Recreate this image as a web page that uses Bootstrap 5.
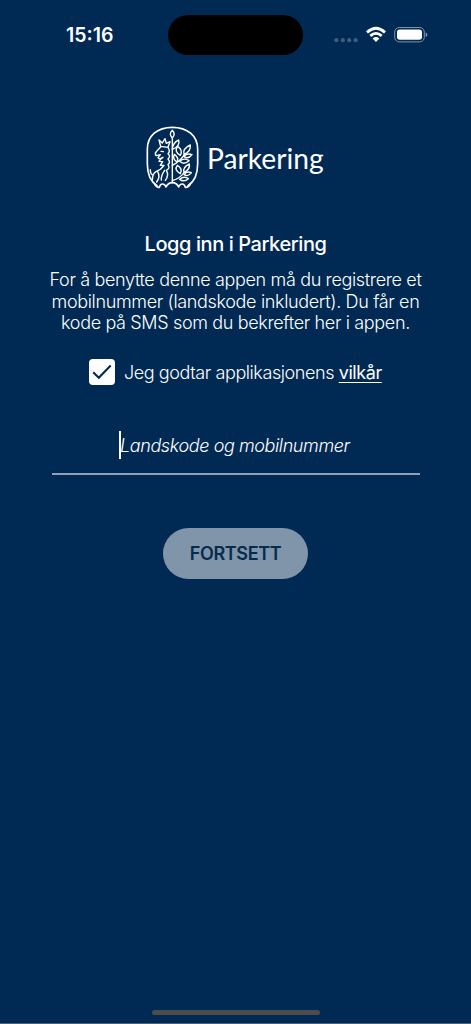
<!DOCTYPE html>
<html lang="no">

<head>
    <meta charset="UTF-8">
    <meta name="viewport" content="width=device-width, initial-scale=1.0">
    <title>Parkering</title>
    <link href="https://cdn.jsdelivr.net/npm/bootstrap@5.3.3/dist/css/bootstrap.min.css" rel="stylesheet">
    <style>
        body {
            background: #002a54;
            font-family: Inter, "Liberation Sans", sans-serif;
            color: #fff;
        }

        .screen {
            height: 1024px;
            overflow: hidden;
            border-bottom: 1px solid #50617a;
        }

        .status-bar {
            height: 70px;
            padding: 0 43px 0 66px;
        }

        .clock {
            width: 102px;
            padding-top: 2px;
            font-size: 19.5px;
            font-weight: 600;
        }

        .island {
            width: 135px;
            height: 40px;
            background: #000;
        }

        .brand {
            margin-top: 50px;
            height: 75px;
            padding-left: 140px;
        }

        .brand-name {
            font-family: Lato, sans-serif;
            font-size: 28.2px;
            line-height: 34px;
            padding: 21px 0 0 2px;
        }

        .heading {
            margin: 36px 0 0;
            font-size: 20px;
            line-height: 26px;
            font-weight: 500;
            letter-spacing: -.42px;
        }

        .intro {
            margin: 12px 0 0;
            font-size: 18px;
            line-height: 21.6px;
            font-weight: 300;
            letter-spacing: -.35px;
        }

        .terms {
            margin: 24px 0 0 89px;
            height: 28px;
            font-size: 18px;
            font-weight: 300;
            letter-spacing: -.42px;
        }

        .terms-box {
            width: 26px;
            height: 26px;
            border-radius: 4px;
            background: #fff;
            margin-right: 9px;
        }

        .terms-text {
            padding-top: 1px;
        }

        .terms a {
            color: #fff;
            font-weight: 400;
            text-decoration-thickness: 1px;
            text-underline-offset: 3px;
        }

        .phone-field {
            margin: 45px 51px 0 52px;
            height: 44px;
            border-bottom: 2px solid #929fb8;
            padding-left: 67px;
            font-size: 18px;
            font-style: italic;
            font-weight: 300;
            letter-spacing: -.4px;
        }

        .caret {
            width: 2px;
            height: 28px;
            background: #fff;
        }

        .phone-hint {
            margin-left: -1px;
            padding-top: 1px;
        }

        .btn-next {
            margin-top: 53px;
            width: 145px;
            height: 51px;
            background: #8094aa;
            color: #062c4d;
            font-size: 18px;
            font-weight: 600;
            letter-spacing: -.35px;
        }

        .home-bar {
            width: 168px;
            height: 5px;
            background: #4c4c4c;
            margin-bottom: 8px;
        }
    </style>
</head>

<body>
    <main class="screen d-flex flex-column text-nowrap">
        <div class="status-bar d-flex align-items-center flex-shrink-0">
            <div class="clock">15:16</div>
            <div class="island rounded-pill"></div>
            <svg class="ms-auto" width="94" height="20" viewBox="0 0 94 20">
                <g fill="#3f5d82">
                    <circle cx="2.4" cy="15.2" r="2.1" />
                    <circle cx="8.8" cy="15.2" r="2.1" />
                    <circle cx="15.2" cy="15.2" r="2.1" />
                    <circle cx="21.6" cy="15.2" r="2.1" />
                </g>
                <g fill="none" stroke="#fff" stroke-width="2.8">
                    <path d="M33 7.4Q42 -.8 51 7.4" />
                    <path d="M36.3 10.9Q42 5.9 47.7 10.9" />
                </g>
                <path d="M38.6 13.5Q42 10.7 45.4 13.5L42 17Z" fill="#fff" />
                <rect x="60.7" y="2.5" width="29.6" height="14.4" rx="4.6" fill="none" stroke="#8094aa" />
                <rect x="63" y="4.6" width="25" height="10.2" rx="2.8" fill="#fff" />
                <path d="M91.6 7.3Q93.4 8 93.4 9.7T91.6 12.1Z" fill="#8094aa" />
            </svg>
        </div>

        <div class="brand d-flex">
            <!-- crest: lion and tree in an oval frame -->
            <svg width="65" height="75" viewBox="0 0 195 225" fill="none" stroke="#fff" stroke-width="4.2" stroke-linecap="round" stroke-linejoin="round">
                <path stroke-width="5" d="M51 197C31 184 22 163 22 132V88C22 47 52 22 97 22S173 47 173 88V132C173 163 164 184 144 197" />
                <path stroke-width="5" d="M44 193Q50 203 58 202Q62 189 71 193Q76 195 78 201Q84 188 97 188T116 201Q118 195 123 193Q132 189 136 202Q145 203 151 193" />
                <path d="M97 54V188" />
                <path d="M97 54Q85 43 97 31Q108 43 97 54Z" />
                <path d="M97 88Q98 68 116 60Q121 80 97 88" />
                <path d="M97 136Q121 124 133 104M97 182Q121 175 133 156" />
                <path d="M121 106Q101 95 113 79Q130 91 121 106ZM132 103Q127 86 151 75Q153 95 132 103ZM132 110Q140 98 156 104Q145 119 132 110ZM119 124Q132 112 147 122Q132 136 119 124ZM111 126Q96 116 103 103Q118 113 111 126Z" />
                <path d="M121 161Q101 150 112 136Q129 146 121 161ZM132 157Q127 142 148 132Q151 149 132 157ZM132 164Q140 152 154 158Q145 172 132 164ZM119 178Q132 166 145 176Q132 188 119 178Z" />
                <path d="M62 79L57 60L67 69L75 56L79 70L90 65L84 82ZM61 82L50 94Q43 100 48 107L61 104L54 113Q58 120 69 112M63 94L70 95" />
                <path d="M84 82Q92 94 84 101Q93 109 84 117Q93 127 84 134Q92 145 79 151Q88 166 76 181" />
                <path d="M65 114L57 124L68 125L61 136L72 136Q62 150 49 154Q37 161 37 180M53 155Q62 170 50 186M38 165Q30 160 31 149M74 151Q63 165 64 180" />
            </svg>
            <div class="brand-name">Parkering</div>
        </div>

        <h1 class="heading text-center">Logg inn i Parkering</h1>
        <p class="intro text-center">For å benytte denne appen må du registrere et<br>mobilnummer (landskode inkludert). Du får en<br>kode på SMS som du bekrefter her i appen.</p>

        <div class="terms d-flex align-items-center">
            <span class="terms-box d-flex">
                <svg width="26" height="26" viewBox="0 0 26 26" fill="none" stroke="#002a54" stroke-width="2.1">
                    <path d="M4.2 13.3L9.8 18.7L21.7 6.5" />
                </svg>
            </span>
            <span class="terms-text">Jeg godtar applikasjonens <a href="#">vilkår</a></span>
        </div>

        <div class="phone-field d-flex">
            <span class="caret"></span>
            <span class="phone-hint">Landskode og mobilnummer</span>
        </div>

        <button type="button" class="btn btn-next rounded-pill align-self-center p-0">FORTSETT</button>

        <div class="home-bar rounded-pill mt-auto align-self-center"></div>
    </main>
    <script src="https://cdn.jsdelivr.net/npm/bootstrap@5.3.3/dist/js/bootstrap.bundle.min.js"></script>
</body>

</html>
